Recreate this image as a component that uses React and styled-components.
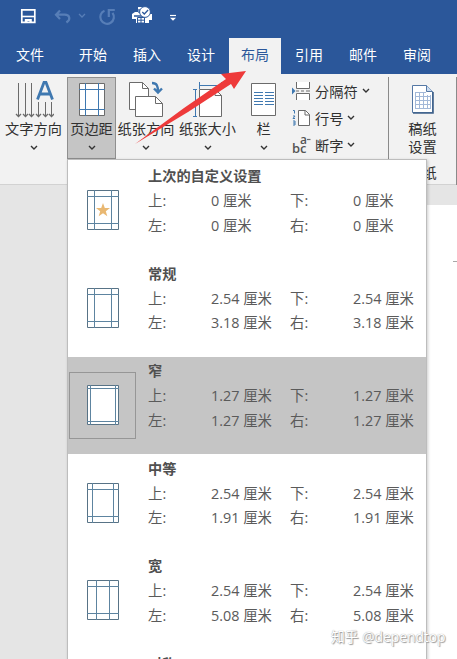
import React from 'react';
import styled, { createGlobalStyle } from 'styled-components';

const COLORS = {
  brand: '#2b579a',
  ribbon: '#f2f2f2',
  canvas: '#e5e5e5',
  pressed: '#c5c5c5',
  line: '#6b6b6b',
  blue: '#3f78b0',
  text: '#303030',
};

const GlobalStyle = createGlobalStyle`
  * {
    box-sizing: border-box;
  }

  body {
    margin: 0;
    font-family: 'Open Sans', 'Noto Sans CJK SC', sans-serif;
    font-size: 14.2px;
  }
`;

const Window = styled.div`
  position: relative;
  display: flex;
  flex-direction: column;
  width: 457px;
  height: 659px;
  overflow: hidden;
  background: ${COLORS.canvas};
  white-space: nowrap;
`;

const Header = styled.header`
  height: 74px;
  background: ${COLORS.brand};
`;

const QuickAccess = styled.div`
  display: flex;
  height: 38px;
  padding-left: 19px;

  svg {
    display: block;
  }
`;

const Tabs = styled.nav`
  display: flex;
  height: 36px;
  font-size: 14px;
`;

const Tab = styled.div`
  width: ${p => (p.$active ? 52 : 54)}px;
  margin: ${p => (p.$active ? '0 1px' : '0')};
  line-height: 33px;
  text-align: center;
  color: ${p => (p.$active ? COLORS.brand : '#fff')};
  background: ${p => (p.$active ? COLORS.ribbon : 'transparent')};
`;

const FileTab = styled(Tab)`
  width: 66px;
  padding-right: 6px;
`;

const Ribbon = styled.div`
  display: flex;
  height: 111px;
  padding-top: 3px;
  background: ${COLORS.ribbon};
  border-bottom: 1px solid #d2d2d2;
`;

const LargeButton = styled.div`
  display: flex;
  flex-direction: column;
  align-items: center;
  width: ${p => p.$width}px;
  height: 82px;
  color: ${COLORS.text};
  background: ${p => (p.$pressed ? COLORS.pressed : 'transparent')};
  border: 1px solid ${p => (p.$pressed ? '#8f8f8f' : 'transparent')};

  > svg {
    flex: none;
    margin-top: 2px;
  }
`;

const ButtonLabel = styled.div`
  height: 20px;
  margin-top: 1px;
  line-height: 20px;
`;

const ArrowSlot = styled.div`
  display: flex;
  margin-top: 6px;
`;

const SmallButtons = styled.div`
  display: flex;
  flex-direction: column;
  width: 101px;
  height: 108px;
  padding-left: 4px;
  border-right: 1px solid #8a8a8a;
`;

const SmallButton = styled.div`
  display: flex;
  align-items: center;
  gap: 4px;
  height: 27.4px;
  color: ${COLORS.text};
`;

const GridPaperGroup = styled.div`
  display: flex;
  flex-direction: column;
  align-items: center;
  width: 68px;
  height: 108px;
  padding-top: 7px;
  line-height: 18px;
  color: ${COLORS.text};
  border-right: 1px solid #8a8a8a;
`;

const GridPaperLabel = styled.div`
  margin-top: 6px;
  line-height: 18px;
`;

const GroupName = styled.div`
  margin-top: 8px;
`;

const Workspace = styled.main`
  display: flex;
  flex: 1;
  justify-content: flex-end;
  padding-top: 20px;
`;

const Page = styled.div`
  width: 57px;
  padding: 56px 0 0 53px;
  background: #fff;
`;

const MarginMark = styled.div`
  height: 1px;
  background: #a8a8a8;
`;

const Menu = styled.div`
  position: absolute;
  top: 159px;
  left: 67px;
  width: 360px;
  height: 510px;
  padding-top: 1.5px;
  overflow: hidden;
  background: #fff;
  border: 1px solid #bdbdbd;
  box-shadow: 1px 1px 3px rgba(0, 0, 0, 0.2);
`;

const MenuItem = styled.div`
  display: flex;
  height: 97.6px;
  background: ${p => (p.$selected ? COLORS.pressed : 'transparent')};
`;

const Thumb = styled.div`
  display: flex;
  flex: none;
  align-items: center;
  justify-content: center;
  width: 67px;
  height: 67px;
  margin: 15px 12px 0 1px;
  border: 1px solid ${p => (p.$selected ? '#969696' : 'transparent')};
`;

const Details = styled.div`
  padding-top: 2.6px;
  color: #5a5a5a;
`;

const Title = styled.div`
  height: 25px;
  line-height: 24px;
  font-weight: 700;
  color: #505050;
`;

const Measures = styled.div`
  display: grid;
  grid-template-columns: 63px 79px 63px 70px;
  grid-auto-rows: 24.5px;
  line-height: 24px;
  font-size: 14.4px;
`;

const RedArrow = styled.svg`
  position: absolute;
  top: 64px;
  left: 130px;
`;

const Watermark = styled.div`
  position: absolute;
  top: 627px;
  left: 331px;
  line-height: 20px;
  font-size: 13.8px;
  color: #fff;
  text-shadow: 0 0 1px #999, 1px 1px 1px #999;
`;

const Chevron = () => (
  <svg width="8" height="6" viewBox="0 0 8 6" fill="none" stroke="#333" strokeWidth="1.4">
    <path d="M1 1l3 3 3-3" />
  </svg>
);

const QuickIcons = () => (
  <svg width="170" height="34" fill="none">
    <path d="M2.8 9.8h13v12.6h-13z" stroke="#fff" strokeWidth="1.7" />
    <path d="M3 16.5h13" stroke="#fff" strokeWidth="1.6" />
    <path d="M5.8 19h7v4h-2.4v-2H8.5v2H5.8z" fill="#fff" />
    <g stroke="#577eb7" strokeWidth="2.2">
      <path d="M41 10.5L37 14.7l4 4.2M37.5 14.7h8.3c5 0 6.3 4.6 1.6 7.8" />
      <path d="M60 14l3 3 3-3" strokeWidth="1.3" />
      <path d="M85.5 10.7a6.8 6.8 0 1 0 8 2.2M89.8 17V10h6" />
    </g>
    <path d="M116 12h3V7h8v7h6v6h-3v3h-13v-4h-4v-5z" fill="#fff" />
    <path d="M115 16h13M120 9v4" stroke={COLORS.brand} strokeWidth="1.3" />
    <path d="M118.5 17.5h7V23h-7zM118.5 20.2h7M122 18v5" stroke={COLORS.brand} />
    <circle cx="126" cy="12" r="5.4" fill="#fff" stroke={COLORS.brand} />
    <path d="M123.3 12l2 2 3.8-4" stroke={COLORS.brand} strokeWidth="1.3" />
    <path d="M151 15.5h6" stroke="#fff" strokeWidth="1.2" />
    <path d="M151 17.8h6l-3 3z" fill="#fff" />
  </svg>
);

const TextDirectionIcon = () => (
  <svg width="40" height="38" fill="none">
    <path
      d="M4.5 3v33M11.5 3v33M17.5 3v33M24.5 22v14M31.5 22v14M37.5 22v14"
      stroke={COLORS.line}
    />
    <path
      d="M2 34l2.5 2.5L7 34M9 34l2.5 2.5L14 34M15 34l2.5 2.5L20 34M22 34l2.5 2.5L27 34M29 34l2.5 2.5L34 34M35 34l2.5 2.5L40 34"
      stroke={COLORS.line}
      strokeWidth="1.3"
    />
    <path d="M23.5 19.5L30 2.5h2L38.5 19.5M26 14h10" stroke={COLORS.blue} strokeWidth="2.8" />
  </svg>
);

const MarginsIcon = () => (
  <svg width="26" height="38" fill="none">
    <path d="M.5 3.5h25v32H.5z" fill="#fff" stroke={COLORS.line} />
    <path d="M6.5 3v33M19.5 3v33M0 9.5h26M0 29.5h26" stroke={COLORS.blue} />
  </svg>
);

const OrientationIcon = () => (
  <svg width="36" height="38" fill="none" stroke={COLORS.line}>
    <path d="M1.5 2.5h13l6 6v21h-19z" fill="#fff" />
    <path d="M14.5 2.5v6h6" />
    <path d="M7.5 16.5h20l7 7v13h-27z" fill="#fff" />
    <path d="M27.5 16.5v7h7" />
    <path d="M24 3c5 0 6 3 6 9M26 8.5l4 4 4-4" stroke={COLORS.blue} strokeWidth="2.4" />
  </svg>
);

const SizeIcon = () => (
  <svg width="30" height="38" fill="none" stroke={COLORS.line}>
    <path d="M6.5 9.5h16l6 6v21h-22z" fill="#fff" />
    <path d="M22 9.5v6h6.5" />
    <path d="M6.5 2v7M28.5 2v7M6.5 5.5h22M0 9.5h4M0 36.5h4M2.5 10v26" stroke={COLORS.blue} />
  </svg>
);

const ColumnsIcon = () => (
  <svg width="26" height="38" fill="none">
    <path d="M.5 3.5h24v32H.5z" fill="#fff" stroke={COLORS.line} />
    <path
      d="M3 12.5h9M14 12.5h9M3 15.5h9M14 15.5h9M3 18.5h9M14 18.5h9M3 21.5h9M14 21.5h9M3 24.5h9M14 24.5h9"
      stroke={COLORS.blue}
    />
  </svg>
);

const BreaksIcon = () => (
  <svg width="19" height="18" fill="none">
    <path d="M4.5 0v6.5h13V0M4.5 18v-6.5h13V18" fill="#fff" stroke={COLORS.line} />
    <path d="M4 9h3M9 9h3M14 9h4" stroke={COLORS.line} />
    <path d="M0 5.5L3.5 9 0 12.5z" fill={COLORS.blue} />
  </svg>
);

const LineNumbersIcon = () => (
  <svg width="19" height="18" fill="none">
    <path d="M6.5 1.5h7l4 4v11h-11z" fill="#fff" stroke={COLORS.line} />
    <path d="M13 1.5v4.5h4.5" stroke={COLORS.line} />
    <path d="M1 1.5h1.5v3M1 7h2l-2 2.5h2M1 12h2v4H1M1 14h2" stroke={COLORS.blue} />
  </svg>
);

const HyphenationIcon = () => (
  <svg width="19" height="20" fill="#555" fontSize="13" fontWeight="600" overflow="visible">
    <text x="0" y="18">bc</text>
    <text x="8" y="9" fontSize="12">a</text>
    <path d="M15 4.5h3.5" stroke={COLORS.line} strokeWidth="1.2" />
  </svg>
);

const GridPaperIcon = () => (
  <svg width="24" height="30" fill="none">
    <path d="M1.5 1.5h14l6 6v21h-20z" fill="#fff" stroke="#5578a5" />
    <path d="M22 8v21H2" stroke="#3e6089" strokeWidth="1.6" />
    <path d="M15.5 1.5v6h6" fill="#cbdcf0" stroke="#5578a5" />
    <path
      d="M4 8.5h11M4 12.5h15M4 16.5h15M4 20.5h15M4 24.5h15M4.5 8v17M8.5 8v17M12.5 8v17M16.5 11v14M19.5 11v14"
      stroke="#a2b8d8"
    />
  </svg>
);

const MarginPreview = ({ side, edge, starred }) => (
  <svg width="32" height="40" fill="none" stroke="#587386">
    <path d="M.5 .5h31v39H.5z" fill="#fff" />
    <path
      d={`M${side + 0.5} 0v40M${31.5 - side} 0v40M0 ${edge + 0.5}h32M0 ${39.5 - edge}h32`}
      stroke="#5d84a0"
    />
    {starred && (
      <path
        d="M16 13l1.8 5h5.2l-4.2 3.2 1.5 5.1-4.3-3-4.3 3 1.5-5.1L9 18h5.2z"
        fill="#e9b872"
        stroke="none"
      />
    )}
  </svg>
);

const LARGE_BUTTONS = [
  { label: '文字方向', width: 67, Icon: TextDirectionIcon },
  { label: '页边距', width: 49, Icon: MarginsIcon, pressed: true },
  { label: '纸张方向', width: 60, Icon: OrientationIcon },
  { label: '纸张大小', width: 63, Icon: SizeIcon },
  { label: '栏', width: 49, Icon: ColumnsIcon },
];

const SMALL_BUTTONS = [
  { label: '分隔符', Icon: BreaksIcon },
  { label: '行号', Icon: LineNumbersIcon },
  { label: '断字', Icon: HyphenationIcon },
];

const PRESETS = [
  { name: '上次的自定义设置', vertical: '0', horizontal: '0', side: 7, edge: 6, starred: true },
  { name: '常规', vertical: '2.54', horizontal: '3.18', side: 7, edge: 6 },
  { name: '窄', vertical: '1.27', horizontal: '1.27', side: 3, edge: 3, selected: true },
  { name: '中等', vertical: '2.54', horizontal: '1.91', side: 5, edge: 6 },
  { name: '宽', vertical: '2.54', horizontal: '5.08', side: 9, edge: 6 },
  { name: '对称', vertical: '2.54', horizontal: '3.18', side: 7, edge: 6 },
];

const Preset = ({ name, vertical, horizontal, selected, ...preview }) => (
  <MenuItem $selected={selected}>
    <Thumb $selected={selected}>
      <MarginPreview {...preview} />
    </Thumb>
    <Details>
      <Title>{name}</Title>
      <Measures>
        <span>上:</span>
        <span>{vertical} 厘米</span>
        <span>下:</span>
        <span>{vertical} 厘米</span>
        <span>左:</span>
        <span>{horizontal} 厘米</span>
        <span>右:</span>
        <span>{horizontal} 厘米</span>
      </Measures>
    </Details>
  </MenuItem>
);

const App = () => (
  <Window>
    <GlobalStyle />
    <Header>
      <QuickAccess>
        <QuickIcons />
      </QuickAccess>
      <Tabs>
        <FileTab>文件</FileTab>
        {['开始', '插入', '设计', '布局', '引用', '邮件', '审阅'].map(tab => (
          <Tab key={tab} $active={tab === '布局'}>{tab}</Tab>
        ))}
      </Tabs>
    </Header>

    <Ribbon>
      {LARGE_BUTTONS.map(({ label, width, Icon, pressed }) => (
        <LargeButton key={label} $width={width} $pressed={pressed}>
          <Icon />
          <ButtonLabel>{label}</ButtonLabel>
          <ArrowSlot>
            <Chevron />
          </ArrowSlot>
        </LargeButton>
      ))}
      <SmallButtons>
        {SMALL_BUTTONS.map(({ label, Icon }) => (
          <SmallButton key={label}>
            <Icon />
            <span>{label}</span>
            <Chevron />
          </SmallButton>
        ))}
      </SmallButtons>
      <GridPaperGroup>
        <GridPaperIcon />
        <GridPaperLabel>稿纸<br />设置</GridPaperLabel>
        <GroupName>稿纸</GroupName>
      </GridPaperGroup>
    </Ribbon>

    <Workspace>
      <Page>
        <MarginMark />
      </Page>
    </Workspace>

    <Menu>
      {PRESETS.map(preset => (
        <Preset key={preset.name} {...preset} />
      ))}
    </Menu>

    <RedArrow width="120" height="84">
      <path d="M5 80L54 44 96 15l-5-5 25-3-12 18-3-5-43 28z" fill="#ee3a3a" />
    </RedArrow>
    <Watermark>知乎 @dependtop</Watermark>
  </Window>
);

export default App;
